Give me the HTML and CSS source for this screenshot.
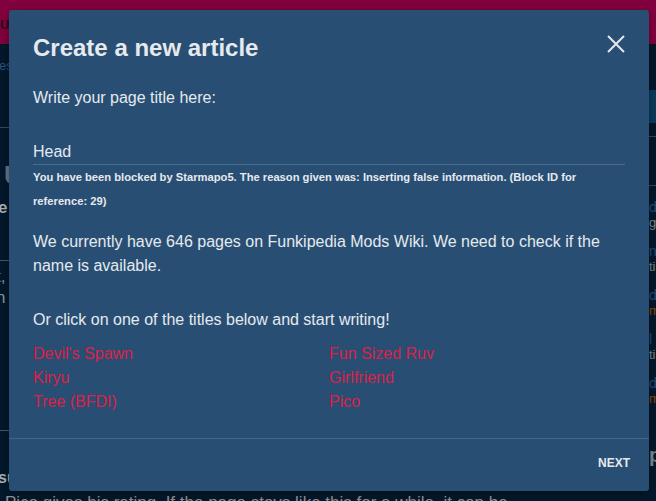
FILE: index.html
```html
<!DOCTYPE html>
<html lang="en">
<head>
<meta charset="utf-8">
<title>Create a new article</title>
<link rel="stylesheet" href="styles.css">
</head>
<body>
<div class="page">
  <header class="topbar"><span class="brand">UNKIPEDIA MODS</span></header>
  <div class="layout">
    <main class="main">
      <div class="crumbs"><a class="crumb">es</a></div>
      <h1 class="bg-title">Unknown Suffering</h1>
      <div class="bg-sub">e</div>
      <hr class="bg-rule rule-a">
      <p class="bg-text t1">t, and the song is played.</p>
      <p class="bg-text t2">n <span class="bg-link">link</span></p>
      <hr class="bg-rule rule-b">
      <p class="bg-text t3">t</p>
      <p class="bg-bold">su</p>
      <p class="bg-last">Pico gives his rating. If the page stays like this for a while, it can be</p>
    </main>
    <aside class="rail">
      <div class="rail-band"></div>
      <hr class="rail-rule r1">
      <div class="rail-gap"></div>
      <hr class="rail-rule r2">
      <div class="rail-item"><span class="rl">da</span><span class="rs">g</span></div>
      <div class="rail-item"><span class="rl">n</span><span class="rs">ti</span></div>
      <div class="rail-item"><span class="rl">da</span><span class="ro">m</span></div>
      <div class="rail-item"><span class="rl">l</span><span class="rs">ti</span></div>
      <div class="rail-item"><span class="rl">di</span><span class="ro">m</span></div>
      <div class="rail-head">p</div>
    </aside>
  </div>

  <div class="modal" role="dialog" aria-labelledby="modal-title">
    <div class="modal-head">
      <h2 id="modal-title" class="modal-title">Create a new article</h2>
      <button class="close" aria-label="Close">
        <svg width="18" height="18" viewBox="0 0 18 18" aria-hidden="true">
          <path d="M1 1 L17 17 M17 1 L1 17" stroke="#e4e8ee" stroke-width="2" fill="none"/>
        </svg>
      </button>
    </div>
    <div class="modal-body">
      <label class="prompt" for="title-input">Write your page title here:</label>
      <div class="field" id="title-input">Head</div>
      <p class="error">You have been blocked by Starmapo5. The reason given was: Inserting false information. (Block ID for reference: 29)</p>
      <p class="info">We currently have 646 pages on Funkipedia Mods Wiki. We need to check if the name is available.</p>
      <p class="info or">Or click on one of the titles below and start writing!</p>
      <ul class="suggestions">
        <li><a>Devil's Spawn</a></li>
        <li><a>Fun Sized Ruv</a></li>
        <li><a>Kiryu</a></li>
        <li><a>Girlfriend</a></li>
        <li><a>Tree (BFDI)</a></li>
        <li><a>Pico</a></li>
      </ul>
    </div>
    <div class="modal-foot">
      <button class="next">NEXT</button>
    </div>
  </div>
</div>
</body>
</html>
```

FILE: styles.css
```css
* { box-sizing: border-box; }
html, body { margin: 0; padding: 0; }
body {
  width: 656px;
  height: 501px;
  overflow: hidden;
  background: #03182b;
  font-family: "Liberation Sans", Arial, sans-serif;
  color: #e6e9ee;
}
.page { position: relative; width: 656px; height: 501px; overflow: hidden; }

/* ---------- dimmed background page ---------- */
.topbar {
  height: 44px;
  background: #83003f;
  display: flex;
  align-items: center;
  padding-top: 4px;
}
.brand {
  font-size: 13px;
  font-weight: bold;
  color: #2b0a1c;
  letter-spacing: 0.2px;
  white-space: nowrap;
}
.layout {
  display: grid;
  grid-template-columns: 1fr 7px;
}
.main { overflow: hidden; white-space: nowrap; }
.crumbs {
  height: 84px;
  padding-top: 14px;
  border-bottom: 1px solid #3c4753;
  font-size: 13px;
}
.crumb { color: #2d4f86; margin-left: -1px; }
.bg-title {
  margin: 0;
  padding: 32px 0 0 4px;
  font-size: 26px;
  line-height: 30px;
  color: #6d7680;
  font-weight: bold;
}
.bg-sub {
  margin-top: 8px;
  font-size: 17px;
  font-weight: bold;
  color: #a9b0b7;
  margin-left: -2px;
}
.bg-rule { border: 0; margin: 0; height: 1px; background: #4b5560; }
.rule-a { margin-top: 42px; }
.bg-text { margin: 0; font-size: 17px; color: #8b939c; margin-left: -4px; }
.t1 { margin-top: 5px; line-height: 22px; }
.t2 { line-height: 20px; }
.bg-link { color: #0d2f70; }
.rule-b { margin-top: 122px; }
.t3 { margin-top: 18px; margin-left: 10px; line-height: 20px; }
.bg-bold { margin: 0; font-size: 16px; font-weight: bold; color: #a9b0b7; line-height: 18px; margin-left: -2px; }
.bg-last {
  margin: 6px 0 0 5px;
  font-size: 17px;
  line-height: 20px;
  color: #8b939c;
}

.rail { overflow: hidden; white-space: nowrap; }
.rail-band { margin-top: 46px; height: 33px; background: #0c3a5c; }
.rail-rule { border: 0; margin: 0; height: 1px; background: #3c4753; }
.r1 { margin-top: 13px; }
.rail-gap { height: 48px; }
.rail-item {
  display: flex;
  flex-direction: column;
  margin-top: 14px;
  font-size: 14px;
  line-height: 15px;
}
.rl { color: #24497d; }
.rs { color: #7f8891; font-size: 13px; }
.ro { color: #8a4a06; font-size: 13px; }
.rail-head { margin-top: 38px; font-size: 20px; font-weight: bold; color: #7f8891; }

/* ---------- modal ---------- */
.modal {
  position: absolute;
  left: 9px;
  top: 10px;
  width: 640px;
  height: 481px;
  background: #284f73;
  border-radius: 3px;
  display: flex;
  flex-direction: column;
  box-shadow: 0 2px 10px rgba(0, 0, 0, 0.35);
}
.modal-head {
  display: flex;
  justify-content: space-between;
  align-items: flex-start;
  padding: 23px 24px 0 24px;
}
.modal-title {
  margin: 0;
  font-size: 24px;
  line-height: 30px;
  font-weight: bold;
  color: #e6e9ee;
}
.close {
  background: none;
  border: 0;
  padding: 0;
  margin: 2px 0 0 0;
  width: 18px;
  height: 18px;
  cursor: pointer;
}
.close svg { display: block; }

.modal-body {
  flex: 1;
  padding: 23px 24px 0 24px;
  font-size: 16px;
  line-height: 24px;
}
.prompt { display: block; color: #e6e9ee; }
.field {
  margin-top: 30px;
  height: 25px;
  border-bottom: 1px solid #4a6d8d;
  color: #e6e9ee;
}
.error {
  margin: 0;
  font-size: 11.2px;
  font-weight: bold;
  line-height: 24px;
  color: #e6e9ee;
}
.info { margin: 17px 0 0 0; color: #e6e9ee; }
.info.or { margin-top: 30px; }
.suggestions {
  list-style: none;
  margin: 10px 0 0 0;
  padding: 0;
  display: grid;
  grid-template-columns: 1fr 1fr;
}
.suggestions a { color: #dc1f48; cursor: pointer; }

.modal-foot {
  height: 53px;
  border-top: 1px solid #3f6689;
  display: flex;
  justify-content: flex-end;
  align-items: center;
  padding: 0 19px 4px 0;
}
.next {
  background: none;
  border: 0;
  padding: 0;
  font-family: "Liberation Sans", Arial, sans-serif;
  font-size: 12px;
  line-height: 12px;
  font-weight: bold;
  color: #e6e9ee;
  cursor: pointer;
}
```
